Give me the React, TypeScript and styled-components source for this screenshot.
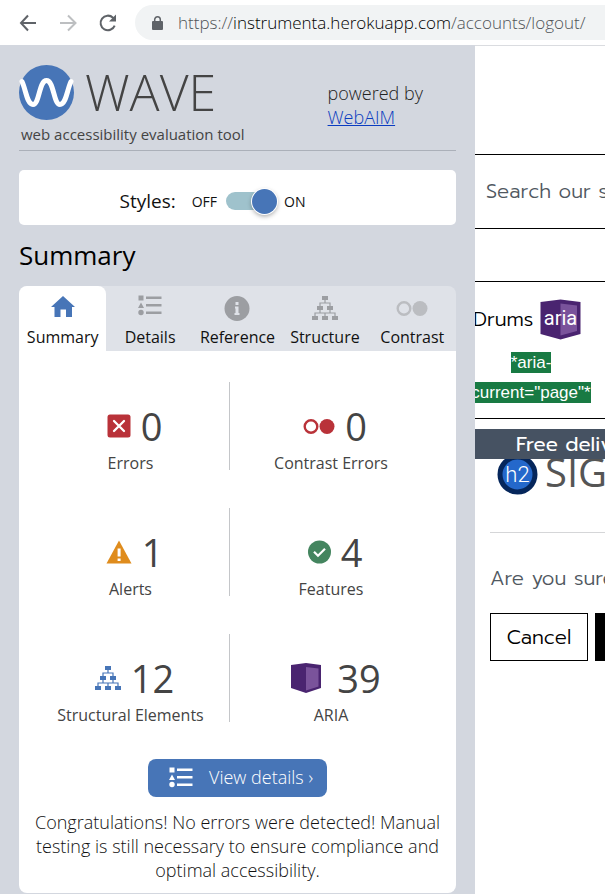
import React from "react";
import styled, { createGlobalStyle, css } from "styled-components";

const GlobalStyle = createGlobalStyle`
  * { box-sizing: border-box; }
  html, body, #root { height: 100%; }
  body {
    margin: 0;
    background: #fff;
    color: #444;
    font-family: "Open Sans", "Noto Sans", sans-serif;
  }
  button, input { font: inherit; margin: 0; }
`;

const siteFont = css`
  font-family: Prompt, "Noto Sans", sans-serif;
  font-weight: 300;
`;

const Page = styled.div`
  display: flex;
  flex-direction: column;
  min-height: 100%;
  overflow: hidden;
`;

/* Browser bar */

const BrowserBar = styled.header`
  display: flex;
  align-items: center;
  height: 45px;
  padding-left: 18px;
  background: #fff;
`;

const NavButton = styled.button`
  display: flex;
  flex: none;
  width: 22px;
  height: 22px;
  margin-right: 17px;
  padding: 0;
  border: 0;
  background: none;
  color: #5f6368;

  &:disabled { color: #bdbfc1; }
`;

const AddressField = styled.div`
  display: flex;
  flex: 1;
  align-items: center;
  gap: 15px;
  min-width: 0;
  height: 35px;
  padding-left: 17px;
  border-radius: 18px 0 0 18px;
  background: #f1f3f4;
`;

const Url = styled.span`
  color: #505458;
  font-size: 17px;
  font-weight: 300;
  line-height: 24px;
  white-space: nowrap;

  b { color: #000; font-weight: 300; }
`;

const Columns = styled.div`
  display: flex;
  flex: 1;
`;

/* Evaluation side panel */

const Sidebar = styled.aside`
  flex: 0 0 475px;
  padding: 19px 19px 0;
  background: #d3d7df;
`;

const SidebarHeader = styled.div`
  display: flex;
  justify-content: space-between;
  height: 87px;
  padding-right: 33px;
  border-bottom: 1px solid #abb0b9;
`;

const LogoRow = styled.div`
  display: flex;
  align-items: center;
  gap: 11px;
  height: 56px;
`;

const LogoText = styled.span`
  color: #444;
  font-size: 50px;
  font-weight: 300;
  line-height: 56px;
`;

const Tagline = styled.div`
  padding-left: 2px;
  font-size: 15px;
  line-height: 28px;
`;

const PoweredBy = styled.p`
  margin: 17px 0 0;
  color: #222;
  font-size: 18px;
  font-weight: 300;
  line-height: 24px;

  a { display: block; color: #0a3cc0; }
`;

const StylesBox = styled.div`
  display: flex;
  align-items: center;
  justify-content: center;
  height: 55px;
  margin-top: 19px;
  padding: 7px 50px 0 0;
  border-radius: 5px;
  background: #fff;
  color: #111;
  font-size: 14px;
`;

const StylesLabel = styled.label`
  margin-right: 16px;
  font-size: 19px;
`;

const Toggle = styled.input`
  appearance: none;
  display: flex;
  align-items: center;
  justify-content: flex-end;
  width: 51px;
  height: 18px;
  margin: 0 7px 0 9px;
  border-radius: 9px;
  background: #9fc2cc;

  &::before {
    content: "";
    width: 25px;
    height: 25px;
    border-radius: 50%;
    background: #4775b7;
    box-shadow: 0 0 0 1px #fff, 0 2px 5px rgba(0, 0, 0, 0.4);
  }
  &:not(:checked) { justify-content: flex-start; }
`;

const SummaryHeading = styled.h1`
  margin: 11px 0 12px;
  color: #000;
  font-size: 26px;
  font-weight: 400;
  line-height: 38px;
`;

const TabBar = styled.div`
  display: grid;
  grid-template-columns: repeat(5, 1fr);
  height: 65px;
  border-radius: 8px 8px 0 0;
  background: #dfe2e8;
`;

const Tab = styled.button<{ $active?: boolean }>`
  display: flex;
  flex-direction: column;
  align-items: center;
  padding: 8px 0 0;
  border: 0;
  border-radius: 8px 8px 0 0;
  background: ${(p) => (p.$active ? "#fff" : "transparent")};
  color: #111;
  font-size: 16px;
  line-height: 22px;

  svg {
    height: 28px;
    margin-bottom: 4px;
    color: ${(p) => (p.$active ? "#4775b7" : "#9c9ea2")};
  }
`;

const SummaryPanel = styled.section`
  display: flex;
  flex-direction: column;
  align-items: center;
  padding: 31px 12px 11px;
  border-radius: 0 0 8px 8px;
  background: #fff;
`;

const StatGrid = styled.div`
  display: grid;
  grid-template-columns: 99fr 101fr;
  row-gap: 38px;
  align-self: stretch;
  margin: 0 12px 0 1px;
`;

const Stat = styled.div`
  display: flex;
  flex-direction: column;
  align-items: center;
  height: 88px;
  padding-top: 19px;

  &:nth-child(odd) { border-right: 1px solid #c4c6c9; }
`;

const StatFigure = styled.div`
  display: flex;
  align-items: center;
  gap: 10px;
  padding-left: 8px;
  font-size: 38px;
  line-height: 50px;
`;

const StatLabel = styled.div`
  font-size: 16px;
  line-height: 24px;
  white-space: nowrap;
`;

const DetailsButton = styled.button`
  display: flex;
  align-items: center;
  gap: 16px;
  height: 38px;
  margin-top: 37px;
  padding: 0 14px 2px 21px;
  border: 0;
  border-radius: 8px;
  background: #4775b7;
  color: #fff;
  font-size: 18px;
  font-weight: 300;
`;

const Message = styled.p`
  margin: 13px 0 0;
  color: #111;
  font-size: 18px;
  font-weight: 300;
  line-height: 24px;
  text-align: center;
`;

/* Evaluated site */

const Site = styled.main`
  ${siteFont}
  flex: 1;
  min-width: 0;
  overflow: hidden;
  border-top: 1px solid #dadce0;
  background: #fff;
  white-space: nowrap;
`;

const SearchBox = styled.input`
  display: block;
  width: 100%;
  height: 75px;
  margin-top: 108px;
  padding: 0 0 2px 11px;
  border: solid #000;
  border-width: 1px 0;
  border-radius: 0;
  background: #fff;
  font-size: 20px;

  &::placeholder { color: #50585f; opacity: 1; }
`;

const Category = styled.nav`
  height: 138px;
  margin-top: 52px;
  padding-top: 17px;
  border: solid #000;
  border-width: 1px 0;
`;

const CategoryLink = styled.a`
  display: flex;
  align-items: center;
  gap: 7px;
  height: 40px;
  margin-left: -2px;
  color: #000;
  font-size: 20px;
  text-decoration: none;
`;

const AriaNote = styled.div`
  width: 122px;
  margin: 9px 0 0 -5px;
  font-family: "Liberation Sans", Arial, sans-serif;
  font-size: 17px;
  font-weight: 400;
  line-height: 30px;
  text-align: center;
  white-space: normal;

  span { padding: 1px 0; background: #187a43; color: #fff; }
`;

const DeliveryBanner = styled.div`
  position: relative;
  z-index: 1;
  height: 30px;
  margin-top: 10px;
  padding-left: 41px;
  background: #465262;
  color: #fff;
  font-size: 20px;
  font-weight: 400;
  line-height: 30px;
`;

const Content = styled.div`
  padding-left: 15px;
`;

const Title = styled.h2`
  display: flex;
  align-items: center;
  gap: 7px;
  height: 48px;
  margin: -9px 0 34px;
  padding: 0 0 4px 7px;
  color: #555;
  font-family: "Open Sans", sans-serif;
  font-size: 40px;
  font-weight: 400;
  line-height: 44px;

  svg { flex: none; margin-top: 4px; }
`;

const Question = styled.p`
  margin: 0;
  padding: 30px 0 20px;
  border-top: 1px solid #d5d6d8;
  color: #50585f;
  font-size: 20px;
  line-height: 30px;
`;

const ButtonRow = styled.div`
  display: flex;
  gap: 7px;
`;

const SiteButton = styled.button<{ $dark?: boolean }>`
  flex: 0 0 98px;
  height: 48px;
  padding: 0;
  border: 1px solid #000;
  background: ${(p) => (p.$dark ? "#000" : "#fff")};
  color: #000;
  font-size: 20px;
`;

/* Icons */

const WaveMark = () => (
  <svg width="55" height="55" viewBox="0 0 55 55" fill="none" aria-hidden="true">
    <circle cx="27.5" cy="27.5" r="27.5" fill="#4775b7" />
    <path
      d="M3 16.500C7 25 8 39.500 14 39.500C20.500 39.500 20 15.500 27.500 15.500C35 15.500 34.500 39.500 41 39.500C47 39.500 48 25 52 16.500"
      stroke="#fff"
      strokeWidth="5"
      strokeLinecap="round"
    />
  </svg>
);

const BackIcon = () => (
  <svg width="22" height="22" viewBox="0 0 22 22" fill="none" stroke="currentColor" strokeWidth="2">
    <path d="M18 11H3.500M10 3.500L3 11L10 18.500" />
  </svg>
);

const ForwardIcon = () => (
  <svg width="22" height="22" viewBox="0 0 22 22" fill="none" stroke="currentColor" strokeWidth="2">
    <path d="M3 11H18M11 3.500L18.500 11L11 18.500" />
  </svg>
);

const ReloadIcon = () => (
  <svg width="22" height="22" viewBox="0 0 22 22" fill="none">
    <path d="M18.700 13.600A7.300 7.300 0 1 1 17 5.700L18.500 7.500" stroke="currentColor" strokeWidth="2" />
    <path d="M20 2.500V9.500H13Z" fill="currentColor" />
  </svg>
);

const LockIcon = () => (
  <svg width="11" height="14" viewBox="0 0 11 14" fill="none" aria-hidden="true">
    <rect y="5" width="11" height="9" rx="1" fill="#5f6368" />
    <path d="M2.700 6V3.600A2.800 2.800 0 0 1 8.300 3.600V6" stroke="#5f6368" strokeWidth="1.500" />
  </svg>
);

const HomeIcon = () => (
  <svg width="24" height="28" viewBox="0 0 24 28" fill="currentColor" aria-hidden="true">
    <path d="M12 2L24 13H21V23H15V15.500H9.500V23H3.500V13H0Z" />
  </svg>
);

const ListIcon = () => (
  <svg
    width="24"
    height="22"
    viewBox="0 -1.5 24 22"
    preserveAspectRatio="xMidYMin meet"
    fill="currentColor"
    aria-hidden="true"
  >
    <path d="M0.500 0H5.500V5H0.500ZM3 7L6 12.500H0Z" />
    <circle cx="3" cy="17" r="2.700" />
    <path d="M8 1H23.500V3.500H8ZM8 8.500H23.500V11H8ZM8 16H23.500V18.500H8Z" />
  </svg>
);

const InfoIcon = () => (
  <svg width="26" height="28" viewBox="0 0 26 28" aria-hidden="true">
    <circle cx="13" cy="14.500" r="12.500" fill="currentColor" />
    <path d="M11.500 8H14.500V11H11.500ZM11 12.500H14.500V19H15.500V21H10.500V19H11.500V14.500H11Z" fill="#dfe2e8" />
  </svg>
);

const TreeIcon = ({ color = "currentColor" }: { color?: string }) => (
  <svg width="26" height="28" viewBox="0 0 26 28" fill={color} aria-hidden="true">
    <path d="M10 2H16V6H10ZM5 12H11V16H5ZM15 12H21V16H15ZM0 22H6V26H0ZM10 22H16V26H10ZM20 22H26V26H20Z" />
    <path
      d="M13 6V9M8 12V9H18V12M8 16V19M18 16V19M3 22V19H23V22M13 19V22"
      fill="none"
      stroke={color}
      strokeWidth="1.200"
    />
  </svg>
);

const CirclesIcon = ({ color }: { color: string }) => (
  <svg width="32" height="28" viewBox="0 0 32 28" aria-hidden="true">
    <circle cx="8" cy="14.500" r="6.300" fill="none" stroke={color} strokeWidth="2.400" />
    <circle cx="24" cy="14.500" r="7.500" fill={color} />
  </svg>
);

const ErrorIcon = () => (
  <svg width="24" height="24" viewBox="0 0 24 24" aria-hidden="true">
    <rect x="0.500" y="0.500" width="23" height="23" rx="2.500" fill="#b93239" />
    <path
      d="M7 7L17 17M17 7L7 17"
      stroke="#fff"
      strokeWidth="2.300"
      strokeLinecap="round"
    />
  </svg>
);

const AlertIcon = () => (
  <svg width="26" height="24" viewBox="0 0 26 24" aria-hidden="true">
    <path d="M13 0.500L25.500 23.500H0.500Z" fill="#df8c1d" />
    <path d="M11.600 8.500H14.600V16.500H11.600ZM11.600 18.500H14.600V21H11.600Z" fill="#fff" />
  </svg>
);

const FeatureIcon = () => (
  <svg width="23" height="24" viewBox="0 0 23 24" fill="none" aria-hidden="true">
    <circle cx="11.500" cy="12" r="11.500" fill="#44855f" />
    <path d="M6 11.800L10 15.800L17 8.800" stroke="#fff" strokeWidth="2.200" />
  </svg>
);

const AriaIcon = () => (
  <svg width="38" height="30" viewBox="-2 0 38 30" aria-hidden="true">
    <path d="M0 2L15 0L30 2V25L15 30L0 25Z" fill="#4a2470" />
    <path d="M15 4L27.500 5.500V23.500L15 27.500Z" fill="#7a539b" />
  </svg>
);

const AriaBadge = () => (
  <svg width="41" height="41" viewBox="0 0 41 41" role="img" aria-label="aria">
    <path d="M0.500 3L20.500 0.500L40.500 3V35L20.500 40.500L0.500 35Z" fill="#4a2470" />
    <path d="M20.500 4.500L37 6.500V32L20.500 36.500Z" fill="#7a539b" />
    <text x="20.500" y="25.500" fill="#fff" fontFamily="Roboto, sans-serif" fontWeight="400" fontSize="20" textAnchor="middle">
      aria
    </text>
  </svg>
);

const HeadingBadge = () => (
  <svg width="41" height="41" viewBox="0 0 41 41" role="img" aria-label="h2">
    <circle cx="20.500" cy="20.500" r="17.500" fill="#2468cb" stroke="#05265b" strokeWidth="5" />
    <text x="20.500" y="28" fill="#fff" fontFamily="Roboto, sans-serif" fontWeight="300" fontSize="22" textAnchor="middle">
      h2
    </text>
  </svg>
);

const tabs = [
  { label: "Summary", icon: <HomeIcon /> },
  { label: "Details", icon: <ListIcon /> },
  { label: "Reference", icon: <InfoIcon /> },
  { label: "Structure", icon: <TreeIcon /> },
  { label: "Contrast", icon: <CirclesIcon color="#bbbdc1" /> },
];

const stats = [
  { label: "Errors", count: 0, icon: <ErrorIcon /> },
  { label: "Contrast Errors", count: 0, icon: <CirclesIcon color="#b93239" /> },
  { label: "Alerts", count: 1, icon: <AlertIcon /> },
  { label: "Features", count: 4, icon: <FeatureIcon /> },
  { label: "Structural Elements", count: 12, icon: <TreeIcon color="#4775b7" /> },
  { label: "ARIA", count: 39, icon: <AriaIcon /> },
];

export default function App() {
  return (
    <Page>
      <GlobalStyle />
      <BrowserBar>
        <NavButton aria-label="Back"><BackIcon /></NavButton>
        <NavButton aria-label="Forward" disabled><ForwardIcon /></NavButton>
        <NavButton aria-label="Reload"><ReloadIcon /></NavButton>
        <AddressField>
          <LockIcon />
          <Url>https://<b>instrumenta.herokuapp.com</b>/accounts/logout/</Url>
        </AddressField>
      </BrowserBar>
      <Columns>
        <Sidebar>
          <SidebarHeader>
            <div>
              <LogoRow>
                <WaveMark />
                <LogoText>WAVE</LogoText>
              </LogoRow>
              <Tagline>web accessibility evaluation tool</Tagline>
            </div>
            <PoweredBy>powered by <a href="#webaim">WebAIM</a></PoweredBy>
          </SidebarHeader>
          <StylesBox>
            <StylesLabel htmlFor="styles-toggle">Styles:</StylesLabel>
            <span>OFF</span>
            <Toggle id="styles-toggle" type="checkbox" role="switch" defaultChecked />
            <span>ON</span>
          </StylesBox>
          <SummaryHeading>Summary</SummaryHeading>
          <TabBar role="tablist">
            {tabs.map((tab, i) => (
              <Tab key={tab.label} role="tab" aria-selected={i === 0} $active={i === 0}>
                {tab.icon}
                {tab.label}
              </Tab>
            ))}
          </TabBar>
          <SummaryPanel role="tabpanel" aria-label="Summary">
            <StatGrid>
              {stats.map((stat) => (
                <Stat key={stat.label}>
                  <StatFigure>{stat.icon}<span>{stat.count}</span></StatFigure>
                  <StatLabel>{stat.label}</StatLabel>
                </Stat>
              ))}
            </StatGrid>
            <DetailsButton><ListIcon />View details ›</DetailsButton>
            <Message>
              Congratulations! No errors were detected! Manual testing is still necessary to ensure
              compliance and optimal accessibility.
            </Message>
          </SummaryPanel>
        </Sidebar>
        <Site>
          <SearchBox type="text" aria-label="Search our site" placeholder="Search our site" />
          <Category>
            <CategoryLink href="#drums">Drums <AriaBadge /></CategoryLink>
            <AriaNote><span>*aria-current="page"*</span></AriaNote>
          </Category>
          <DeliveryBanner>Free delivery</DeliveryBanner>
          <Content>
            <Title><HeadingBadge />SIGN OUT</Title>
            <Question>Are you sure you want to sign out?</Question>
            <ButtonRow>
              <SiteButton>Cancel</SiteButton>
              <SiteButton $dark aria-label="Sign out" />
            </ButtonRow>
          </Content>
        </Site>
      </Columns>
    </Page>
  );
}
